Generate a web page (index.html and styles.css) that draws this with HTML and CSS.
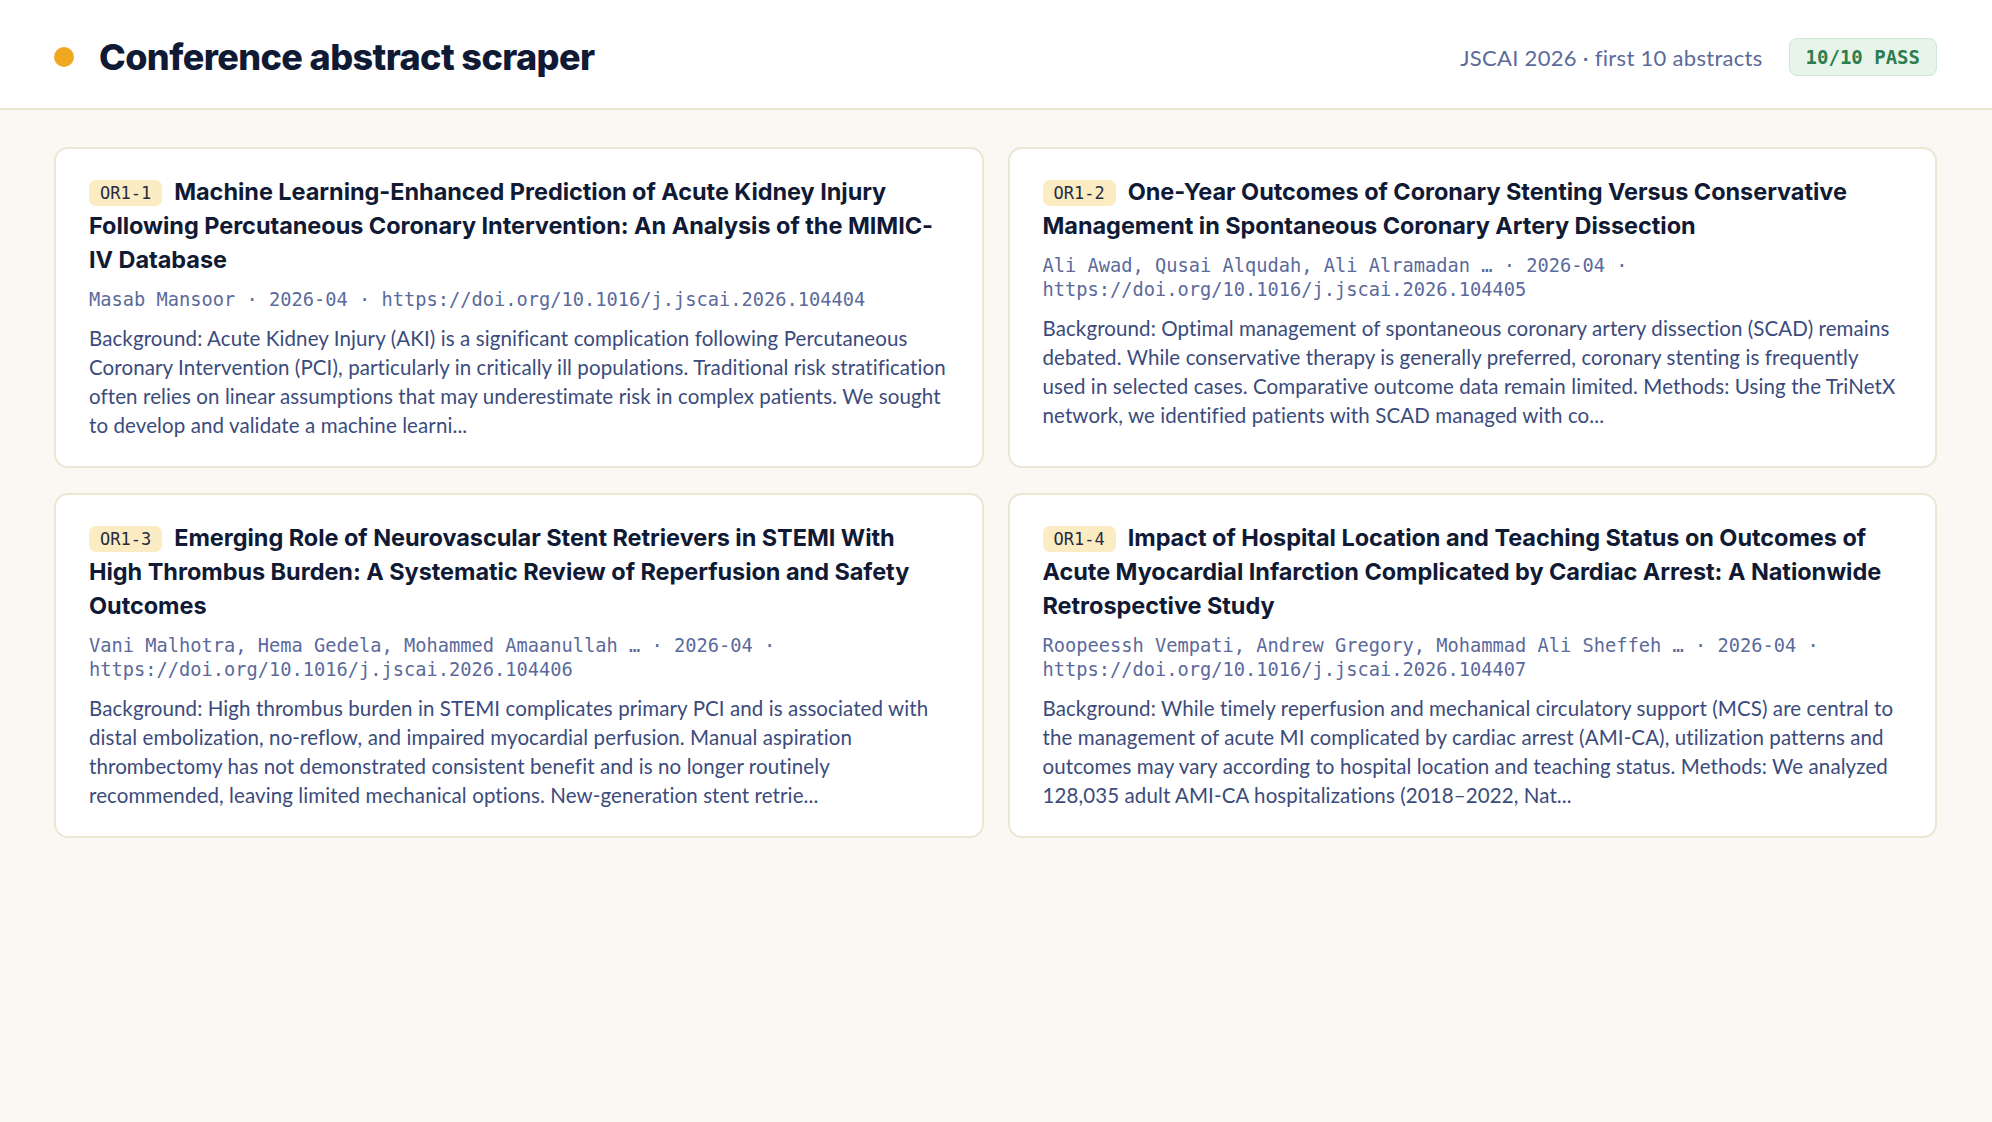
FILE: index.html
```html
<!DOCTYPE html>
<html lang="en">
<head>
<meta charset="utf-8">
<title>Conference abstract scraper</title>
<link rel="stylesheet" href="styles.css">
</head>
<body>
<header class="topbar">
  <div class="brand">
    <span class="dot"></span>
    <h1 class="app-title">Conference abstract scraper</h1>
  </div>
  <div class="status">
    <span class="status-text">JSCAI 2026 · first 10 abstracts</span>
    <span class="pass-badge">10/10 PASS</span>
  </div>
</header>
<main class="grid">
  <article class="card">
    <h2 class="card-title"><span class="tag">OR1-1</span>Machine Learning-Enhanced Prediction of Acute Kidney Injury Following Percutaneous Coronary Intervention: An Analysis of the MIMIC-IV Database</h2>
    <p class="meta">Masab Mansoor · 2026-04 · https://doi.org/10.1016/j.jscai.2026.104404</p>
    <p class="abstract">Background: Acute Kidney Injury (AKI) is a significant complication following Percutaneous Coronary Intervention (PCI), particularly in critically ill populations. Traditional risk stratification often relies on linear assumptions that may underestimate risk in complex patients. We sought to develop and validate a machine learni...</p>
  </article>
  <article class="card">
    <h2 class="card-title"><span class="tag">OR1-2</span>One-Year Outcomes of Coronary Stenting Versus Conservative Management in Spontaneous Coronary Artery Dissection</h2>
    <p class="meta">Ali Awad, Qusai Alqudah, Ali Alramadan … · 2026-04 · https://doi.org/10.1016/j.jscai.2026.104405</p>
    <p class="abstract">Background: Optimal management of spontaneous coronary artery dissection (SCAD) remains debated. While conservative therapy is generally preferred, coronary stenting is frequently used in selected cases. Comparative outcome data remain limited. Methods: Using the TriNetX network, we identified patients with SCAD managed with co...</p>
  </article>
  <article class="card">
    <h2 class="card-title"><span class="tag">OR1-3</span>Emerging Role of Neurovascular Stent Retrievers in STEMI With High Thrombus Burden: A Systematic Review of Reperfusion and Safety Outcomes</h2>
    <p class="meta">Vani Malhotra, Hema Gedela, Mohammed Amaanullah … · 2026-04 · https://doi.org/10.1016/j.jscai.2026.104406</p>
    <p class="abstract">Background: High thrombus burden in STEMI complicates primary PCI and is associated with distal embolization, no-reflow, and impaired myocardial perfusion. Manual aspiration thrombectomy has not demonstrated consistent benefit and is no longer routinely recommended, leaving limited mechanical options. New-generation stent retrie...</p>
  </article>
  <article class="card">
    <h2 class="card-title"><span class="tag">OR1-4</span>Impact of Hospital Location and Teaching Status on Outcomes of Acute Myocardial Infarction Complicated by Cardiac Arrest: A Nationwide Retrospective Study</h2>
    <p class="meta">Roopeessh Vempati, Andrew Gregory, Mohammad Ali Sheffeh … · 2026-04 · https://doi.org/10.1016/j.jscai.2026.104407</p>
    <p class="abstract">Background: While timely reperfusion and mechanical circulatory support (MCS) are central to the management of acute MI complicated by cardiac arrest (AMI-CA), utilization patterns and outcomes may vary according to hospital location and teaching status. Methods: We analyzed 128,035 adult AMI-CA hospitalizations (2018–2022, Nat...</p>
  </article>
</main>
</body>
</html>
```
FILE: styles.css
```css
* { box-sizing: border-box; }
html, body { margin: 0; padding: 0; }
body {
  background: #faf8f3;
  font-family: Lato, "Noto Sans", sans-serif;
  color: #111a35;
  min-height: 1122px;
}
.topbar {
  height: 110px;
  background: #ffffff;
  border-bottom: 2px solid #ebe5d3;
  display: flex;
  align-items: center;
  justify-content: space-between;
  padding: 6px 55px 0 54px;
}
.brand { display: flex; align-items: center; gap: 25px; }
.dot {
  width: 20px; height: 20px; border-radius: 50%;
  background: #f0a820;
  flex: none;
}
.app-title {
  margin: 0;
  font-family: Inter, Lato, sans-serif;
  font-size: 36px;
  font-weight: 800;
  letter-spacing: -0.6px;
  color: #111a35;
}
.status { display: flex; align-items: center; gap: 26px; }
.status-text { font-size: 22px; letter-spacing: 0.3px; color: #5b6a9b; }
.pass-badge {
  font-family: "DejaVu Sans Mono", "Liberation Mono", monospace;
  font-weight: 700;
  font-size: 19px;
  color: #2e7d4f;
  background: #e7f4ea;
  border: 1.5px solid #cfe7d6;
  border-radius: 8px;
  padding: 7px 16px;
}
.grid {
  display: grid;
  grid-template-columns: 1fr 1fr;
  gap: 25px 24px;
  padding: 37px 55px 40px 54px;
}
.card {
  background: #ffffff;
  border: 2px solid #ece6d5;
  border-radius: 14px;
  padding: 26px 32px 26px 33px;
}
.card-title {
  margin: 0;
  font-family: Inter, Lato, sans-serif;
  font-size: 23.5px;
  font-weight: 700;
  line-height: 34px;
  letter-spacing: -0.05px;
  color: #111a35;
}
.tag {
  display: inline-block;
  font-family: "DejaVu Sans Mono", "Liberation Mono", monospace;
  font-size: 17px;
  font-weight: 500;
  line-height: 26px;
  padding: 0 11px;
  background: #fcecc4;
  color: #262c40;
  border-radius: 7px;
  margin-right: 12px;
  vertical-align: 1px;
  letter-spacing: 0;
}
.meta {
  margin: 11px 0 0;
  font-family: "DejaVu Sans Mono", "Liberation Mono", monospace;
  font-size: 18.7px;
  line-height: 24px;
  color: #5b6a9b;
}
.abstract {
  margin: 12px 0 0;
  font-size: 20.5px;
  letter-spacing: 0.1px;
  line-height: 29px;
  color: #3b4b7c;
}
```
